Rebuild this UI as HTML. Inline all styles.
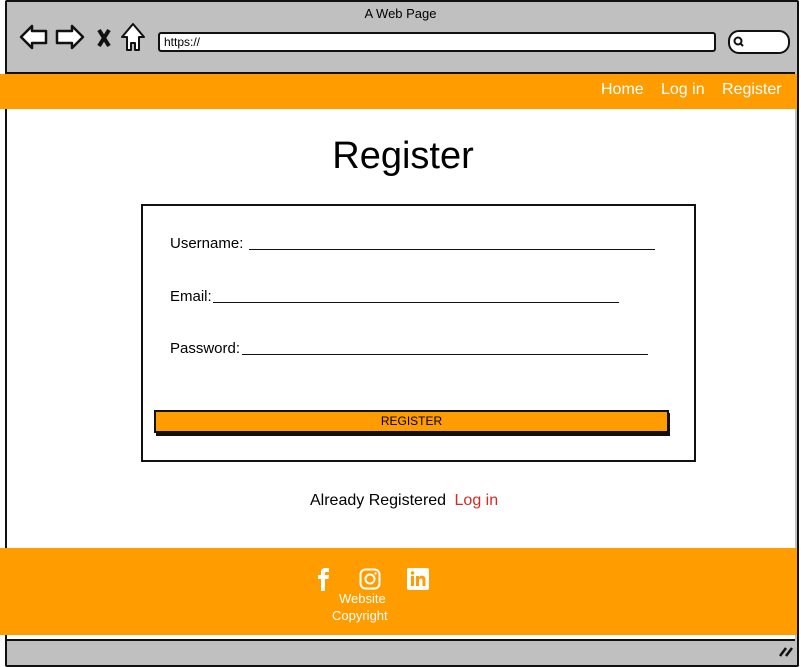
<!DOCTYPE html>
<html><head><style>
body{margin:0;width:801px;height:666px;background:#fff;position:relative;overflow:hidden;font-family:"Liberation Sans",sans-serif;}
.abs{position:absolute;}
</style></head><body>
<div class="abs" style="left:5px;top:0;width:790px;height:663px;border:2px solid #111;border-radius:2px;background:#c0c0c0;"></div>
<div class="abs" style="left:7px;top:72px;width:788px;height:565px;background:#fff;border-top:2px solid #111;border-bottom:2px solid #111;"></div>
<div class="abs" style="left:0;top:6px;width:801px;text-align:center;font-size:13px;">A Web Page</div>
<svg class="abs" style="left:18px;top:22px" width="130" height="32" viewBox="0 0 130 32">
<path d="M3 15 L14 4 L14 9 L28 9 L28 21 L14 21 L14 26 Z" fill="#fff" stroke="#111" stroke-width="2.5" stroke-linejoin="round"/>
<path d="M65 15 L54 4 L54 9 L39 9 L39 21 L54 21 L54 26 Z" fill="#fff" stroke="#111" stroke-width="2.5" stroke-linejoin="round"/>
<path d="M81 8 L91 24 M91 8 L81 24" stroke="#111" stroke-width="4"/>
<path d="M115 2 L104 15 L109 15 L109 28 L113 28 L113 21 L117 21 L117 28 L121 28 L121 15 L126 15 Z" fill="#fff" stroke="#111" stroke-width="2" stroke-linejoin="round"/>
</svg>
<div class="abs" style="left:158px;top:32px;width:550px;height:16px;background:#fff;border:2px solid #111;border-radius:3px;font-size:12px;line-height:16px;padding-left:4px;">https://</div>
<div class="abs" style="left:728px;top:30px;width:58px;height:20px;background:#fff;border:2px solid #111;border-radius:11px;"></div>
<svg class="abs" style="left:732px;top:35px" width="14" height="14"><circle cx="6" cy="6" r="3.5" fill="none" stroke="#111" stroke-width="2"/><path d="M8.5 8.5 L11 11" stroke="#111" stroke-width="2"/></svg>
<div class="abs" style="left:0;top:74px;width:797px;height:35px;background:#ff9c00;"></div>
<div class="abs" style="left:601px;top:81px;font-size:16px;color:#fff;">Home</div>
<div class="abs" style="left:661px;top:81px;font-size:16px;color:#fff;">Log in</div>
<div class="abs" style="left:722px;top:81px;font-size:16px;color:#fff;">Register</div>
<div class="abs" style="left:0;top:135px;width:806px;text-align:center;font-size:38px;">Register</div>
<div class="abs" style="left:141px;top:204px;width:551px;height:254px;border:2px solid #111;"></div>
<div class="abs" style="left:170px;top:235px;font-size:15px;">Username:</div>
<div class="abs" style="left:249px;top:249px;width:406px;border-top:1.5px solid #111;"></div>
<div class="abs" style="left:170px;top:288px;font-size:15px;">Email:</div>
<div class="abs" style="left:213px;top:302px;width:406px;border-top:1.5px solid #111;"></div>
<div class="abs" style="left:170px;top:340px;font-size:15px;">Password:</div>
<div class="abs" style="left:242px;top:354px;width:406px;border-top:1.5px solid #111;"></div>
<div class="abs" style="left:156px;top:413px;width:514px;height:23px;background:#111;"></div>
<div class="abs" style="left:154px;top:410px;width:511px;height:19px;background:#ff9c00;border:2px solid #111;font-size:12px;text-align:center;line-height:19px;">REGISTER</div>
<div class="abs" style="left:310px;top:492px;font-size:16px;">Already Registered <span style="color:#d42a20;margin-left:4px">Log in</span></div>
<div class="abs" style="left:0;top:548px;width:797px;height:87px;background:#ff9c00;"></div>
<svg class="abs" style="left:316px;top:567px" width="16" height="24"><path d="M5 24 V12 H2 V8 H5 V5 Q5 1 9.5 1 H13 V5 H10 Q9 5 9 6 V8 H13 L12.5 12 H9 V24 Z" fill="#fff"/></svg>
<svg class="abs" style="left:359px;top:568px" width="22" height="22"><rect x="1.5" y="1.5" width="19" height="19" rx="5" fill="none" stroke="#fff" stroke-width="2"/><circle cx="11" cy="11" r="4.5" fill="none" stroke="#fff" stroke-width="2"/><circle cx="16.5" cy="5.5" r="1.2" fill="#fff"/></svg>
<svg class="abs" style="left:407px;top:568px" width="22" height="22"><rect x="0" y="0" width="22" height="22" rx="2" fill="#fff"/><rect x="4" y="8" width="3" height="10" fill="#ff9c00"/><circle cx="5.5" cy="5" r="1.8" fill="#ff9c00"/><path d="M9 8 H12 V9.5 Q13 7.5 15.5 7.8 Q18.5 8 18.5 12 V18 H15.5 V12.5 Q15.5 10.5 14 10.5 Q12 10.5 12 12.5 V18 H9 Z" fill="#ff9c00"/></svg>
<div class="abs" style="left:339px;top:591px;font-size:13px;color:#fff;">Website</div>
<div class="abs" style="left:332px;top:608px;font-size:13px;color:#fff;">Copyright</div>
<svg class="abs" style="left:778px;top:644px" width="16" height="14"><path d="M2 12 L8 4 M8 12 L14 4" stroke="#111" stroke-width="2.5"/></svg>
</body></html>
